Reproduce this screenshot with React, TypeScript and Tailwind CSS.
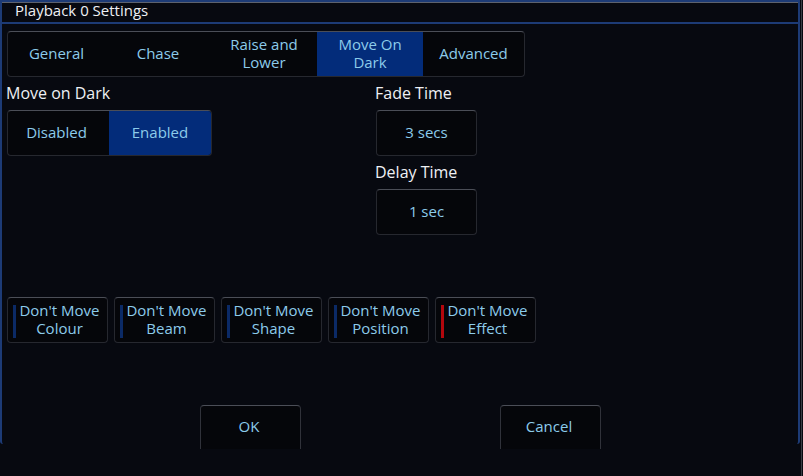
import React from "react";

const font = { fontFamily: '"Open Sans", "Noto Sans", sans-serif' };

function Btn({ children, className = "" }: { children: React.ReactNode; className?: string }) {
  return (
    <div
      className={`flex items-center justify-center rounded-[4px] border border-[#26282f] border-t-[#4b4e57] bg-[#05060a] pb-[2px] text-[15px] leading-[18px] text-[#8ccbea] text-center ${className}`}
    >
      {children}
    </div>
  );
}

function Dont({ label, color }: { label: string; color: string }) {
  return (
    <div className="relative flex h-[46px] w-[101px] items-center justify-center rounded-[4px] border border-[#26282f] border-t-[#4b4e57] bg-[#05060a] pb-[3px] text-center text-[15px] leading-[18px] text-[#8ccbea]">
      <div className={`absolute left-[5px] top-[7px] h-[33px] w-[3px] ${color}`} />
      <span className="pl-[4px]">
        Don't Move
        <br />
        {label}
      </span>
    </div>
  );
}

export default function App() {
  const tabs = ["General", "Chase", "Raise and\nLower", "Move On\nDark", "Advanced"];
  const widths = [97, 106, 106, 106, 101];
  return (
    <div className="flex h-[476px] w-[803px] overflow-hidden bg-[#070910]" style={font}>
      <div className="flex h-[444px] w-[800px] flex-col rounded-b-[3px] border-x-[2px] border-[#1d3b76]">
        <div className="h-[24px] border-t-[2px] border-[#1d3b76]">
          <div className="h-[20px] border-t border-[#5d626e] pl-[13px] text-[15px] leading-[15px] text-[#eef0f4]">
            Playback 0 Settings
          </div>
          <div className="h-[2px] bg-[#1d3b76]" />
        </div>
        <div className="flex flex-1 flex-col pl-[5px]">
          <div className="mt-[7px] flex h-[46px] w-[518px] overflow-hidden rounded-[4px] border border-[#26282f] border-t-[#4b4e57] bg-[#05060a]">
            {tabs.map((t, i) => (
              <div
                key={t}
                style={{ width: widths[i] }}
                className={`flex items-center justify-center whitespace-pre-line pb-[3px] text-center text-[15px] leading-[18px] text-[#8ccbea] ${
                  i === 3 ? "bg-[#032c7a]" : ""
                }`}
              >
                {t}
              </div>
            ))}
          </div>
          <div className="flex">
            <div className="w-[368px]">
              <div className="mt-[6px] h-[20px] text-[16px] leading-[20px] text-[#eef0f4] -ml-[1px]">Move on Dark</div>
              <div className="mt-[7px] flex h-[46px] w-[205px] overflow-hidden rounded-[4px] border border-[#26282f] border-t-[#4b4e57] bg-[#05060a] pb-[2px] text-[15px] text-[#8ccbea]">
                <div className="flex w-[101px] items-center justify-center pr-[4px]">Disabled</div>
                <div className="-mb-[2px] flex flex-1 items-center justify-center bg-[#032c7a] pb-[2px]">Enabled</div>
              </div>
            </div>
            <div>
              <div className="mt-[6px] h-[20px] text-[16px] leading-[20px] text-[#eef0f4]">Fade Time</div>
              <Btn className="ml-[1px] mt-[7px] h-[46px] w-[101px]">3 secs</Btn>
              <div className="mt-[6px] h-[20px] text-[16px] leading-[20px] text-[#eef0f4]">Delay Time</div>
              <Btn className="ml-[1px] mt-[7px] h-[46px] w-[101px]">1 sec</Btn>
            </div>
          </div>
          <div className="mt-[62px] flex gap-[6px]">
            <Dont label="Colour" color="bg-[#0b2a66]" />
            <Dont label="Beam" color="bg-[#0b2a66]" />
            <Dont label="Shape" color="bg-[#0b2a66]" />
            <Dont label="Position" color="bg-[#0b2a66]" />
            <Dont label="Effect" color="bg-[#b3070d]" />
          </div>
          <div className="mt-[62px] flex">
            <div className="ml-[193px] flex h-[44px] w-[101px] items-start justify-center rounded-t-[4px] border-x border-t border-[#30323a] border-t-[#4b4e57] bg-[#05060a] pr-[3px] pt-[9px] text-[15px] text-[#8ccbea]">
              OK
            </div>
            <div className="ml-[199px] flex h-[44px] w-[101px] items-start justify-center rounded-t-[4px] border-x border-t border-[#30323a] border-t-[#4b4e57] bg-[#05060a] pr-[3px] pt-[9px] text-[15px] text-[#8ccbea]">
              Cancel
            </div>
          </div>
        </div>
      </div>
      <div className="ml-[1px] h-full w-[1px] bg-[#3a3d45]" />
    </div>
  );
}
